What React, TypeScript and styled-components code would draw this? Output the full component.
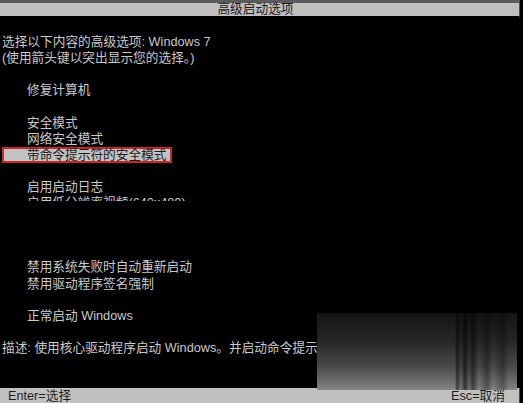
import styled, { createGlobalStyle } from 'styled-components'

const GlobalStyle = createGlobalStyle`
  html, body {
    margin: 0;
    padding: 0;
    background: #000000;
  }
`

const ROW = 16.1

const Screen = styled.div`
  position: relative;
  width: 523px;
  height: 403px;
  overflow: hidden;
  background: #000000;
  display: flex;
  flex-direction: column;
  font-family: 'Liberation Sans', 'Noto Sans CJK SC', sans-serif;
  font-size: 12.7px;
  color: #c9c9c9;
`

const TitleBar = styled.div`
  box-sizing: border-box;
  height: 18px;
  margin-right: 3px;
  border-top: 3px solid #5b5b5b;
  border-right: 1px solid #4a4a4a;
  border-bottom: 2px solid #000000;
  background: #bfbfbf;
  color: #1a1a1a;
  display: flex;
  align-items: center;
  justify-content: center;
  padding-right: 8px;
  line-height: 13px;
`

const Body = styled.div`
  display: flex;
  flex-direction: column;
`

const Row = styled.div<{ $indent?: boolean }>`
  box-sizing: border-box;
  height: ${ROW}px;
  line-height: ${ROW}px;
  padding-left: ${(p) => (p.$indent ? '27px' : '2px')};
  white-space: nowrap;
`

const Selected = styled.div`
  box-sizing: border-box;
  height: ${ROW}px;
  width: 170px;
  margin-left: 2px;
  padding-left: 23px;
  border: 2px solid #c8262a;
  background: #c2c2c2;
  color: #1c1c1c;
  line-height: 12px;
  white-space: nowrap;
`

const CutRow = styled.div`
  height: ${ROW}px;
`

const CutText = styled.div`
  height: 6px;
  overflow: hidden;
  padding-left: 27px;
  line-height: ${ROW}px;
  white-space: nowrap;
`

const StatusBar = styled.div`
  box-sizing: border-box;
  margin-top: auto;
  height: 15px;
  margin-right: 3px;
  border-right: 1px solid #4a4a4a;
  background: #c0c0c0;
  color: #1e1e1e;
  display: flex;
  align-items: center;
  justify-content: space-between;
  padding: 1px 14px 0 8px;
  line-height: 14px;
`

const Watermark = styled.div`
  position: absolute;
  left: 317px;
  top: 313px;
  width: 200px;
  height: 77px;
  background:
    linear-gradient(90deg, rgba(0, 0, 0, 0) 0%, rgba(0, 0, 0, 0) 69%, rgba(0, 0, 0, 0.55) 70%, rgba(0, 0, 0, 0.1) 72%, rgba(0, 0, 0, 0.6) 74%, rgba(0, 0, 0, 0.15) 76%, rgba(0, 0, 0, 0.5) 78%, rgba(0, 0, 0, 0) 81%, rgba(0, 0, 0, 0.35) 85%, rgba(0, 0, 0, 0) 88%, rgba(0, 0, 0, 0.3) 93%, rgba(0, 0, 0, 0) 96%),
    linear-gradient(180deg, #141414 0%, #262626 35%, #4a4a4a 70%, #7a7a7a 95%, #8a8a8a 100%);
`

export default function App() {
  return (
    <>
      <GlobalStyle />
      <Screen>
        <TitleBar>高级启动选项</TitleBar>
        <Body>
          <Row />
          <Row>选择以下内容的高级选项: Windows 7</Row>
          <Row>(使用箭头键以突出显示您的选择。)</Row>
          <Row />
          <Row $indent>修复计算机</Row>
          <Row />
          <Row $indent>安全模式</Row>
          <Row $indent>网络安全模式</Row>
          <Selected>带命令提示符的安全模式</Selected>
          <Row />
          <Row $indent>启用启动日志</Row>
          <CutRow>
            <CutText>启用低分辨率视频(640x480)</CutText>
          </CutRow>
          <Row />
          <Row />
          <Row />
          <Row $indent>禁用系统失败时自动重新启动</Row>
          <Row $indent>禁用驱动程序签名强制</Row>
          <Row />
          <Row $indent>正常启动 Windows</Row>
          <Row />
          <Row>描述: 使用核心驱动程序启动 Windows。并启动命令提示符。</Row>
        </Body>
        <StatusBar>
          <span>Enter=选择</span>
          <span>Esc=取消</span>
        </StatusBar>
        <Watermark />
      </Screen>
    </>
  )
}
